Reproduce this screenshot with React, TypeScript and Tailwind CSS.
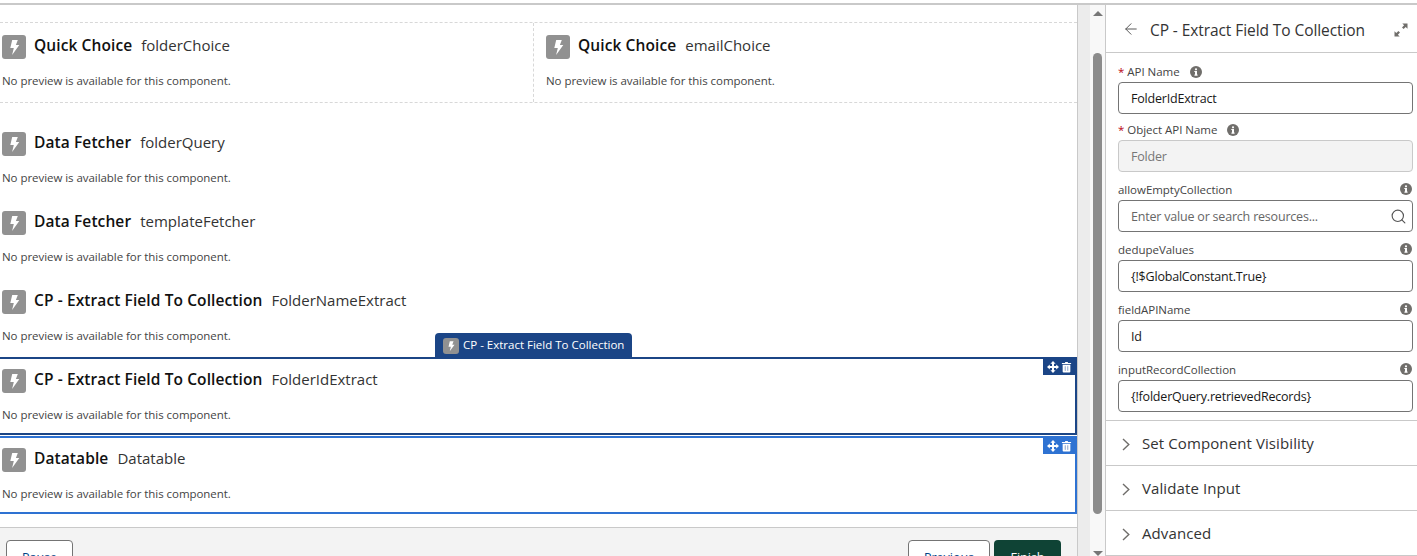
import React from "react";
import { ArrowLeft, Search } from "lucide-react";

const Bolt = ({ s = 24 }: { s?: number }) => (
  <span className="flex shrink-0 items-center justify-center rounded-[3px] bg-[#919191]" style={{ width: s, height: s }}>
    <svg viewBox="0 0 24 24" width={s} height={s}>
      <path d="M10.2 5h5.6l-1.9 5h3.4l-7.2 10 1.7-7H8.3z" fill="#fff" />
    </svg>
  </span>
);

const Info = () => (
  <svg viewBox="0 0 12 12" width="12" height="12" className="shrink-0">
    <circle cx="6" cy="6" r="6" fill="#706e6b" />
    <rect x="5" y="5" width="2" height="4.4" fill="#fff" />
    <rect x="4.3" y="5" width="1.5" height="1" fill="#fff" />
    <rect x="4.3" y="8.6" width="3.4" height="1" fill="#fff" />
    <circle cx="6" cy="3.3" r="1.1" fill="#fff" />
  </svg>
);

const Move = () => (
  <svg viewBox="0 0 12 12" width="12" height="12">
    <path d="M6 0 8.600 2.800H7v2.200h2.200V3.400L12 6 9.200 8.600V7H7v2.200h1.600L6 12 3.400 9.200H5V7H2.800v1.600L0 6l2.800-2.600V5H5V2.800H3.400z" fill="#fff" />
  </svg>
);

const Trash = () => (
  <svg viewBox="0 0 12 12" width="11" height="12">
    <path d="M4.500.5h3v1H11v1.200H1V1.500h3.500z" fill="#fff" />
    <path d="M1.800 3.600h8.400V11a1 1 0 0 1-1 1H2.800a1 1 0 0 1-1-1z" fill="#fff" />
    <rect x="4" y="5.200" width="1.300" height="5" fill="#9fb3d3" />
    <rect x="6.700" y="5.200" width="1.300" height="5" fill="#9fb3d3" />
  </svg>
);

const Expand = () => (
  <svg viewBox="0 0 14 14" width="14" height="14" className="mt-[2px]">
    <path d="M8.300 0.500H13.500V5.700L11.700 3.900 9.600 6 8 4.400 10.100 2.300z" fill="#706e6b" />
    <path d="M5.700 13.500H.5V8.300L2.300 10.100 4.400 8 6 9.600 3.900 11.700z" fill="#706e6b" />
  </svg>
);

const Chevron = () => (
  <svg viewBox="0 0 8 13" width="8" height="13" className="mt-[3px] shrink-0">
    <path d="M1 1l5.800 5.500L1 12" fill="none" stroke="#706e6b" strokeWidth="1.400" />
  </svg>
);

const Head = ({ title, name }: { title: string; name: string }) => (
  <div className="flex h-[24px] items-center">
    <Bolt />
    <span className="mb-[4px] ml-2 text-[15.500px] leading-[22px] font-semibold tracking-[0.1px] text-[#111]">{title}</span>
    <span className="mb-[4px] ml-[9px] text-[15px] leading-[22px] text-[#333]">{name}</span>
  </div>
);

const Preview = ({ title, name, cls = "" }: { title: string; name: string; cls?: string }) => (
  <div className={"flex flex-col pl-[2px] " + cls}>
    <Head title={title} name={name} />
    <p className="mt-[14px] text-[11.500px] leading-[16px] tracking-[-0.05px] text-[#444]">No preview is available for this component.</p>
  </div>
);

const Field = ({ label, value, req, left, placeholder, search, disabled, cls = "" }: { label: string; value?: string; req?: boolean; left?: boolean; placeholder?: boolean; search?: boolean; disabled?: boolean; cls?: string }) => (
  <div className={cls}>
    <div className={"flex h-[18px] items-center pt-[2px] text-[11.500px] tracking-[-0.03px] text-[#444] " + (left ? "" : "justify-between")}>
      <span>
        {req && <span className="mr-[3px] text-[#ba0517]">*</span>}
        {label}
      </span>
      <span className={left ? "-mt-[1px] ml-[10px]" : "mr-[1px] -mt-[3px]"}><Info /></span>
    </div>
    <div className={"mt-[2px] flex h-[32px] items-center justify-between rounded-[4px] border px-[12px] pt-[2px] text-[12.500px] tracking-[-0.2px] " + (disabled ? "border-[#c9c9c9] bg-[#f3f3f3] text-[#777]" : "border-[#747474] bg-white " + (placeholder ? "text-[#666]" : "text-[#181818]"))}>
      <span>{value}</span>
      {search && <Search size={17} className="-mr-[7px] -mt-[2px] text-[#555]" strokeWidth={1.600} />}
    </div>
  </div>
);

const Section = ({ label }: { label: string }) => (
  <div className="flex h-[45px] shrink-0 items-center border-b border-[#c9c9c9] pl-[16px]">
    <Chevron />
    <span className="ml-[12px] text-[15px] tracking-[0.1px] text-[#333]">{label}</span>
  </div>
);

const Actions = ({ color }: { color: string }) => (
  <div className={"absolute right-0 top-0 flex h-[16px] w-[32px] items-center justify-center gap-[2px] " + color}>
    <Move />
    <Trash />
  </div>
);

export default function App() {
  return (
    <div className="flex h-[556px] w-[1417px] flex-col overflow-hidden bg-white font-['Open_Sans','Noto_Sans',sans-serif]">
      <div className="h-[3px] shrink-0 bg-white" />
      <div className="h-[2px] shrink-0 bg-[#c9c9c9]" />
      <div className="flex min-h-0 flex-1">
        {/* Canvas */}
        <div className="flex w-[1078px] shrink-0 flex-col border-r border-[#c9c9c9]">
          <div className="flex-1">
            <div className="mt-[17px] flex h-[81px] border-y border-dashed border-[#d8d8d8]">
              <Preview title="Quick Choice" name="folderChoice" cls="w-[534px] border-r border-dashed border-[#d8d8d8] pt-[12px]" />
              <Preview title="Quick Choice" name="emailChoice" cls="ml-[10px] pt-[12px]" />
            </div>
            <Preview title="Data Fetcher" name="folderQuery" cls="mt-[17px] h-[79px] pt-[12px]" />
            <Preview title="Data Fetcher" name="templateFetcher" cls="h-[79px] pt-[12px]" />
            <Preview title="CP - Extract Field To Collection" name="FolderNameExtract" cls="h-[79px] pt-[12px]" />
            <div className="relative h-[78px] border-2 border-l-0 border-[#1b4586]">
              <div className="absolute -top-[26px] left-[435px] flex h-[25px] w-[197px] items-center gap-[4px] rounded-t-[4px] bg-[#1b4586] pl-[8px]">
                <Bolt s={16} />
                <span className="-mt-[1px] text-[11.500px] whitespace-nowrap text-white">CP - Extract Field To Collection</span>
              </div>
              <Actions color="bg-[#1b4586]" />
              <Preview title="CP - Extract Field To Collection" name="FolderIdExtract" cls="pt-[10px]" />
            </div>
            <div className="relative mt-[1px] h-[78px] border-2 border-l-0 border-[#2e72d2]">
              <Actions color="bg-[#2e72d2]" />
              <Preview title="Datatable" name="Datatable" cls="pt-[10px]" />
            </div>
          </div>
          <div className="flex h-[29px] shrink-0 items-start justify-between border-t border-[#c9c9c9] bg-[#f3f3f3] pt-[12px] pr-[16px] pl-[6px]">
            <button className="h-[32px] w-[67px] rounded-[4px] border border-[#747474] bg-white pt-[4px] text-[12.500px] text-[#014486]">Pause</button>
            <div className="flex gap-[4px]">
              <button className="h-[32px] w-[82px] rounded-[4px] border border-[#747474] bg-white pt-[4px] text-[12.500px] text-[#014486]">Previous</button>
              <button className="h-[32px] w-[67px] rounded-[4px] bg-[#0f4335] pt-[4px] text-[12.500px] text-white">Finish</button>
            </div>
          </div>
        </div>
        {/* Gutter */}
        <div className="w-[12px] shrink-0 bg-[#ececec]" />
        {/* Scrollbar */}
        <div className="flex w-[15px] shrink-0 flex-col items-center bg-[#f8f8f8]">
          <div className="mt-[6px] h-0 w-0 border-x-[5px] border-b-[5px] border-x-transparent border-b-[#777]" />
          <div className="mt-[37px] h-[461px] w-[9px] rounded-[5px] bg-[#8c8c8c]" />
          <div className="mt-[37px] h-0 w-0 border-x-[5px] border-t-[5px] border-x-transparent border-t-[#777]" />
        </div>
        {/* Panel */}
        <div className="flex min-w-0 flex-1 flex-col border-l border-[#c9c9c9] bg-white">
          <div className="flex h-[48px] shrink-0 items-center justify-between border-b border-[#c9c9c9] pr-[9px] pl-[16px]">
            <div className="flex items-center">
              <ArrowLeft size={18} strokeWidth={1.300} className="text-[#555]" />
              <span className="mt-[4px] ml-[10px] text-[15.500px] tracking-[-0.08px] text-[#333]">CP - Extract Field To Collection</span>
            </div>
            <Expand />
          </div>
          <div className="border-b border-[#c9c9c9] pr-[4px] pb-[8px] pl-[12px]">
            <Field cls="mt-[9px]" label="API Name" value="FolderIdExtract" req left />
            <Field cls="mt-[6px]" label="Object API Name" value="Folder" req left disabled />
            <Field cls="mt-[8px]" label="allowEmptyCollection" value="Enter value or search resources..." placeholder search />
            <Field cls="mt-[8px]" label="dedupeValues" value="{!$GlobalConstant.True}" />
            <Field cls="mt-[8px]" label="fieldAPIName" value="Id" />
            <Field cls="mt-[8px]" label="inputRecordCollection" value="{!folderQuery.retrievedRecords}" />
          </div>
          <Section label="Set Component Visibility" />
          <Section label="Validate Input" />
          <Section label="Advanced" />
        </div>
      </div>
    </div>
  );
}
